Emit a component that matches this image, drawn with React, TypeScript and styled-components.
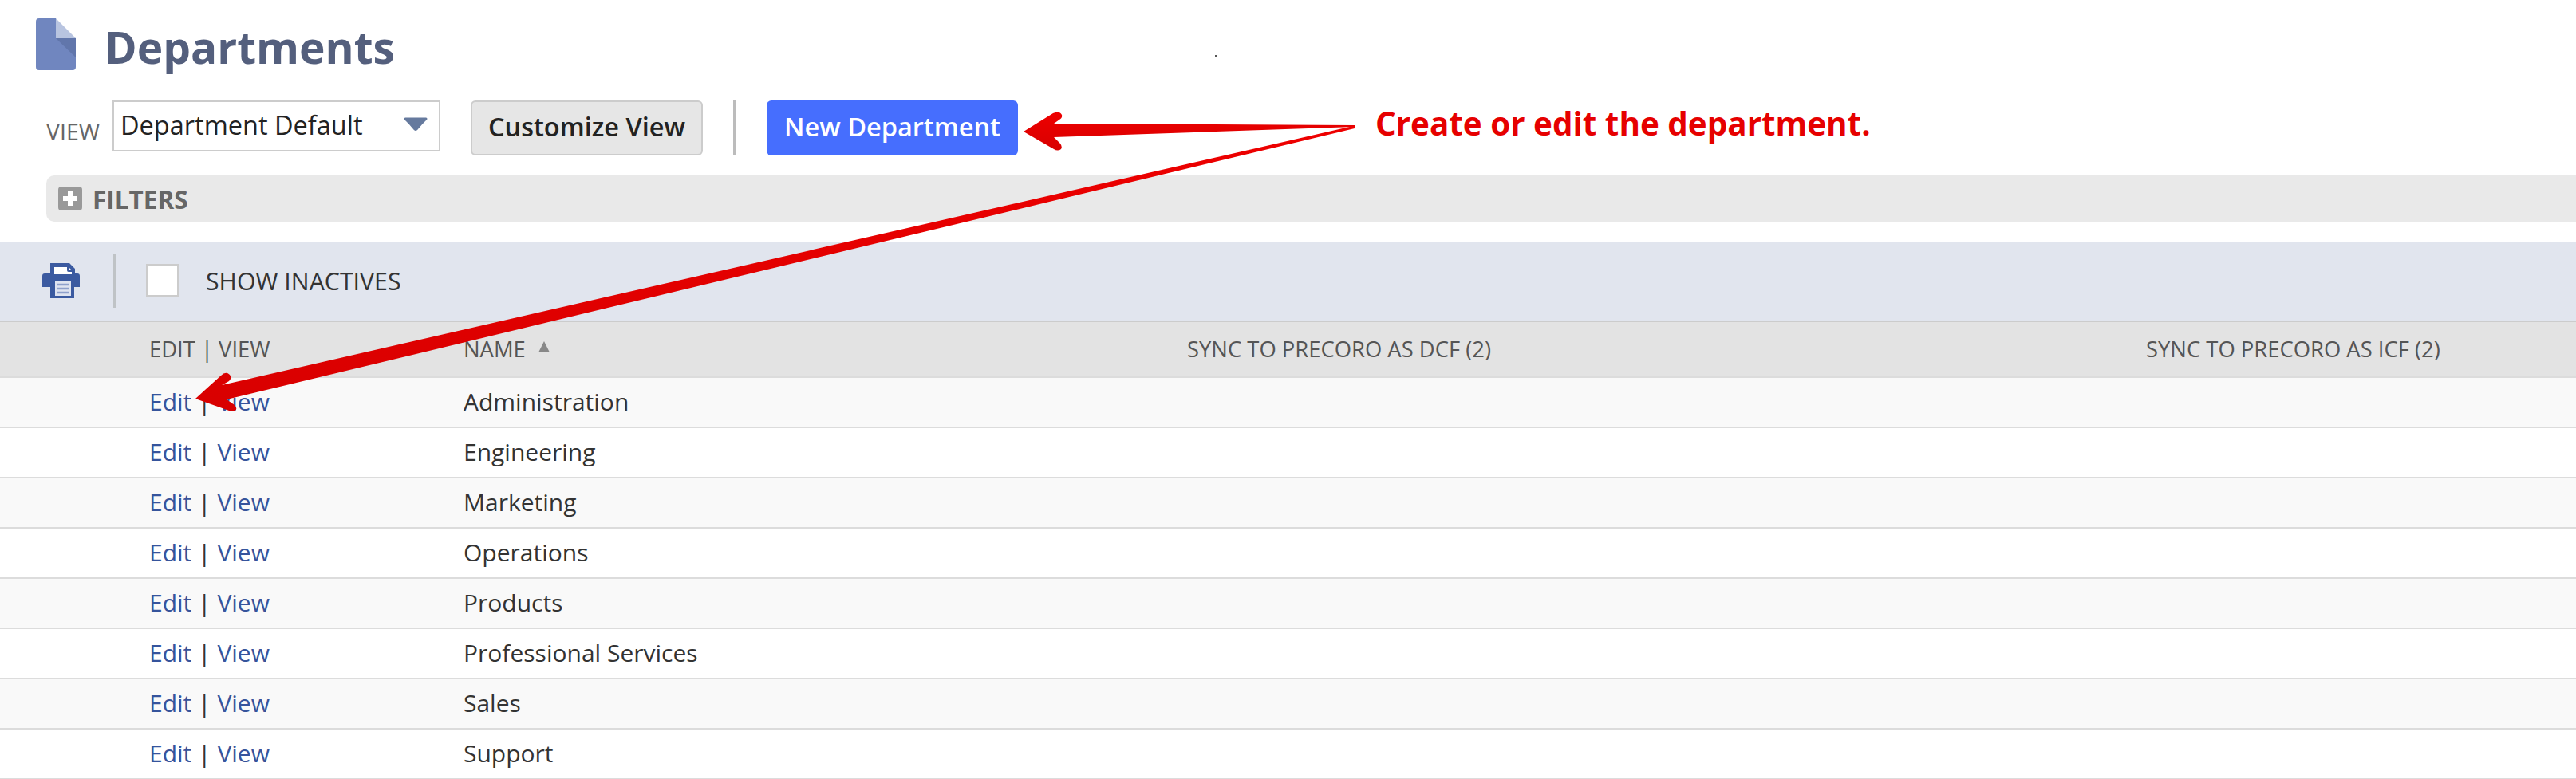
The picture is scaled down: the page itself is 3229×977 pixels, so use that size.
import React from 'react'
import styled, { createGlobalStyle } from 'styled-components'

const Colors = {
  slate: '#545f7d',
  link: '#36549c',
  red: '#e60000',
  line: '#dcdcdc',
}

const rows = [
  'Administration',
  'Engineering',
  'Marketing',
  'Operations',
  'Products',
  'Professional Services',
  'Sales',
  'Support',
]

const GlobalStyle = createGlobalStyle`
  html, body {
    margin: 0;
    padding: 0;
    background: #fff;
  }

  body {
    font-family: "Open Sans", "Noto Sans", sans-serif;
  }
`

const Page = styled.div`
  position: relative;
  width: 3229px;
  height: 977px;
  overflow: hidden;
  background: #fff;
`

const TitleBar = styled.header`
  display: flex;
  align-items: flex-start;
  height: 126px;
  padding: 23px 0 0 45px;
  box-sizing: border-box;
`

const Title = styled.h1`
  margin: 0 0 0 36px;
  font-size: 55px;
  line-height: 72px;
  font-weight: 700;
  color: ${Colors.slate};
`

const ViewBar = styled.div`
  display: flex;
  align-items: flex-start;
  height: 69px;
  padding-left: 58px;
`

const ViewLabel = styled.span`
  width: 83px;
  margin-top: 20px;
  font-size: 28.5px;
  line-height: 38px;
  color: #666;
`

const ViewSelect = styled.div`
  display: flex;
  align-items: center;
  justify-content: space-between;
  box-sizing: border-box;
  width: 411px;
  height: 64px;
  padding: 0 14px 4px 8px;
  border: 2px solid #ccc;
  font-size: 32.5px;
  color: #222;
`

const Button = styled.button<{ $primary?: boolean }>`
  box-sizing: border-box;
  height: 69px;
  padding: 0 0 4px;
  border: ${p => (p.$primary ? 'none' : '2px solid #ccc')};
  border-radius: 6px;
  background: ${p => (p.$primary ? '#466efe' : '#e6e6e6')};
  color: ${p => (p.$primary ? '#fff' : '#222')};
  font-family: inherit;
  font-size: 32.5px;
  font-weight: 600;
`

const CustomizeButton = styled(Button)`
  width: 291px;
  margin-left: 38px;
`

const NewButton = styled(Button)`
  width: 315px;
`

const BarDivider = styled.span`
  width: 3px;
  height: 68px;
  margin: 0 39px 0 38px;
  background: #bcbcbc;
`

const FiltersBar = styled.div`
  display: flex;
  align-items: center;
  height: 58px;
  margin: 25px 0 0 58px;
  padding-left: 15px;
  border-radius: 10px 0 0 10px;
  background: #e9e9e9;
`

const PlusBox = styled.span`
  position: relative;
  width: 30px;
  height: 30px;
  border-radius: 4px;
  background: #999;

  &::before,
  &::after {
    content: '';
    position: absolute;
    background: #fff;
  }

  &::before {
    left: 6px;
    right: 6px;
    top: 12px;
    height: 6px;
  }

  &::after {
    top: 6px;
    bottom: 6px;
    left: 12px;
    width: 6px;
  }
`

const FiltersLabel = styled.span`
  margin-left: 13px;
  font-size: 31.5px;
  font-weight: 700;
  color: #666;
`

const Toolbar = styled.div`
  display: flex;
  align-items: center;
  box-sizing: border-box;
  height: 100px;
  margin-top: 26px;
  padding: 0 0 2px 53px;
  border-bottom: 2px solid #ccc;
  background: #e1e5ee;
`

const ToolbarDivider = styled.span`
  width: 3px;
  height: 67px;
  margin: 0 38px 0 42px;
  background: #bfc3c6;
`

const CheckBox = styled.span`
  box-sizing: border-box;
  width: 42px;
  height: 42px;
  border: 3px solid #ccc;
  background: #fff;
`

const ToolbarLabel = styled.span`
  margin-left: 33px;
  font-size: 30.3px;
  color: #333;
`

const Grid = styled.div<{ $head?: boolean; $odd?: boolean }>`
  display: grid;
  grid-template-columns: 187px 394px 907px 1202px 1fr;
  align-items: center;
  box-sizing: border-box;
  height: ${p => (p.$head ? '70px' : '63px')};
  padding-bottom: 2px;
  border-bottom: 2px solid ${Colors.line};
  background: ${p => (p.$head ? '#e3e3e3' : p.$odd ? '#f9f9f9' : '#fff')};
  font-size: ${p => (p.$head ? '27.4px' : '30px')};
  color: ${p => (p.$head ? '#555' : '#333')};
`

const Actions = styled.span`
  grid-column: 2;
  white-space: pre;
`

const Cell = styled.span<{ $col: number }>`
  grid-column: ${p => p.$col};
  white-space: pre;
`

const RowLink = styled.a`
  color: ${Colors.link};
  text-decoration: none;
`

const SortMark = styled.span`
  display: inline-block;
  width: 0;
  height: 0;
  margin: 0 0 6px 16px;
  border-left: 7px solid transparent;
  border-right: 7px solid transparent;
  border-top: 0;
  border-bottom: 14px solid #888;
`

const Callout = styled.span`
  position: absolute;
  left: 1724px;
  top: 130px;
  font-size: 40.4px;
  line-height: 50px;
  font-weight: 700;
  color: ${Colors.red};
  white-space: pre;
`

const Speck = styled.span`
  position: absolute;
  left: 1523px;
  top: 69px;
  width: 2px;
  height: 2px;
  background: #555;
`

const ArrowLayer = styled.svg`
  position: absolute;
  left: 0;
  top: 0;
  pointer-events: none;
`

const DocIcon = () => (
  <svg width="50" height="65" viewBox="0 0 50 65">
    <path d="M4 0H25V25H50V61a4 4 0 0 1-4 4H4a4 4 0 0 1-4-4V4a4 4 0 0 1 4-4z" fill="#7086bf" />
    <path d="M25 0L50 25H25z" fill="#b8c4e0" />
    <path d="M25 25H50V49z" fill="#6176ab" />
  </svg>
)

const CaretIcon = () => (
  <svg width="30" height="18" viewBox="0 0 30 18">
    <path d="M2 2H28L22 8L16 15Q15 16 14 15L8 8z" fill="#667a9e" stroke="#667a9e" strokeWidth="3" strokeLinejoin="round" />
  </svg>
)

const PrinterIcon = () => (
  <svg width="47" height="44" viewBox="0 0 47 44">
    <path d="M10 0H34L41 7V13H44a3 3 0 0 1 3 3V30H40V44H10V30H0V16a3 3 0 0 1 3-3H10z" fill="#3b5aa0" />
    <path d="M15 5H31V9a2 2 0 0 0 2 2H37V14H15z" fill="#fff" />
    <path d="M33 5L37 9H33z" fill="#fff" />
    <path d="M16 23H36V41H16z" fill="#dfe4f0" />
    <path d="M18 27H34M18 32H34M18 37H34" stroke="#8ea0cb" strokeWidth="2.5" />
  </svg>
)

const Arrows = () => (
  <ArrowLayer width="3229" height="977" viewBox="0 0 3229 977">
    <defs>
      <linearGradient id="arrowFill" x1="0" y1="0" x2="0" y2="1">
        <stop offset="0" stopColor="#ee0000" />
        <stop offset="1" stopColor="#d80000" />
      </linearGradient>
    </defs>
    <path
      d="M1283 165L1320 142Q1328 138 1331 144Q1332 148 1328 150L1321 155L1698 157Q1700 158 1698 159L1321 172L1329 180Q1332 184 1330 187Q1326 190 1321 187z"
      fill="url(#arrowFill)"
    />
    <path
      d="M245 500L277 471Q283 465 288 470Q291 474 287 478L278 483L1696 158Q1700 158 1698 161L284 501L294 508Q298 512 295 515Q292 517 287 515z"
      fill="url(#arrowFill)"
    />
  </ArrowLayer>
)

export default function App() {
  return (
    <Page>
      <GlobalStyle />
      <TitleBar>
        <DocIcon />
        <Title>Departments</Title>
      </TitleBar>
      <ViewBar>
        <ViewLabel>VIEW</ViewLabel>
        <ViewSelect>
          Department Default
          <CaretIcon />
        </ViewSelect>
        <CustomizeButton>Customize View</CustomizeButton>
        <BarDivider />
        <NewButton $primary>New Department</NewButton>
      </ViewBar>
      <FiltersBar>
        <PlusBox />
        <FiltersLabel>FILTERS</FiltersLabel>
      </FiltersBar>
      <Toolbar>
        <PrinterIcon />
        <ToolbarDivider />
        <CheckBox />
        <ToolbarLabel>SHOW INACTIVES</ToolbarLabel>
      </Toolbar>
      <Grid $head>
        <Actions>EDIT | VIEW</Actions>
        <Cell $col={3}>
          NAME
          <SortMark />
        </Cell>
        <Cell $col={4}>SYNC TO PRECORO AS DCF (2)</Cell>
        <Cell $col={5}>SYNC TO PRECORO AS ICF (2)</Cell>
      </Grid>
      {rows.map((name, i) => (
        <Grid key={name} $odd={i % 2 === 0}>
          <Actions>
            <RowLink href="#">Edit</RowLink> | <RowLink href="#">View</RowLink>
          </Actions>
          <Cell $col={3}>{name}</Cell>
        </Grid>
      ))}
      <Speck />
      <Callout>Create or edit the department.</Callout>
      <Arrows />
    </Page>
  )
}
